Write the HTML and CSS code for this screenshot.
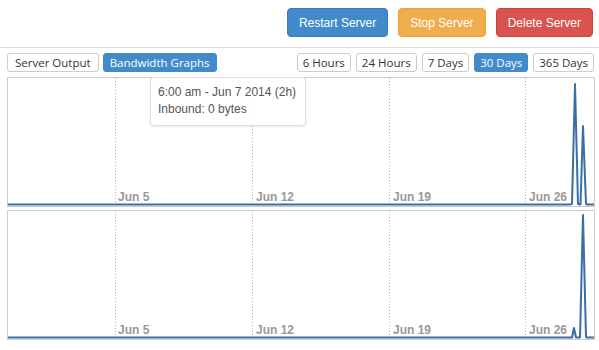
FILE: index.html
```html
<!DOCTYPE html>
<html lang="en">
<head>
    <meta charset="UTF-8">
    <title>Server Bandwidth</title>
    <link rel="stylesheet" href="styles.css">
</head>
<body>
    <div class="actions">
        <button class="btn btn-primary">Restart Server</button>
        <button class="btn btn-warning">Stop Server</button>
        <button class="btn btn-danger">Delete Server</button>
    </div>
    <div class="tabs">
        <div class="group views">
            <span class="tab">Server Output</span>
            <span class="tab active">Bandwidth Graphs</span>
        </div>
        <div class="group ranges">
            <span class="tab">6 Hours</span>
            <span class="tab">24 Hours</span>
            <span class="tab">7 Days</span>
            <span class="tab active">30 Days</span>
            <span class="tab">365 Days</span>
        </div>
    </div>

    <div class="chart">
        <svg width="586" height="128" viewBox="0 0 586 128">
            <g class="grid">
                <line x1="107.5" y1="0" x2="107.5" y2="128"/>
                <line x1="244.5" y1="0" x2="244.5" y2="128"/>
                <line x1="381.5" y1="0" x2="381.5" y2="128"/>
                <line x1="517.5" y1="0" x2="517.5" y2="128"/>
            </g>
            <g class="labels">
                <text x="110" y="123">Jun 5</text>
                <text x="248" y="123">Jun 12</text>
                <text x="385" y="123">Jun 19</text>
                <text x="521" y="123">Jun 26</text>
            </g>
            <polyline class="series" points="0,126.5 562,126.5 564,126 567,6 570,126 572,126.5 572.5,126 575,48 578,126 579,126.5 586,126.5"/>
        </svg>
        <div class="tooltip">
            6:00 am - Jun 7 2014 (2h)<br>
            Inbound: 0 bytes
        </div>
    </div>

    <div class="chart">
        <svg width="586" height="128" viewBox="0 0 586 128">
            <g class="grid">
                <line x1="107.5" y1="0" x2="107.5" y2="128"/>
                <line x1="244.5" y1="0" x2="244.5" y2="128"/>
                <line x1="381.5" y1="0" x2="381.5" y2="128"/>
                <line x1="517.5" y1="0" x2="517.5" y2="128"/>
            </g>
            <g class="labels">
                <text x="110" y="123">Jun 5</text>
                <text x="248" y="123">Jun 12</text>
                <text x="385" y="123">Jun 19</text>
                <text x="521" y="123">Jun 26</text>
            </g>
            <polyline class="series" points="0,126.5 564,126.5 566,117 568,126.5 572,126.5 575,4 578,126 579,126.5 586,126.5"/>
        </svg>
    </div>
</body>
</html>
```

FILE: styles.css
```css
body {
    margin: 0;
    font-family: "Liberation Sans", Arial, sans-serif;
    background-color: #fff;
    width: 599px;
}
.actions {
    display: flex;
    justify-content: flex-end;
    gap: 10px;
    padding: 8px 6px 10px;
    border-bottom: 1px solid #ddd;
}
.btn {
    height: 29px;
    padding: 0 11px;
    border: 1px solid transparent;
    border-radius: 4px;
    color: #fff;
    font-family: "Liberation Sans", Arial, sans-serif;
    font-size: 12px;
    cursor: pointer;
}
.btn-primary {
    background-color: #428bca;
    border-color: #357ebd;
}
.btn-warning {
    background-color: #f0ad4e;
    border-color: #eea236;
}
.btn-danger {
    background-color: #d9534f;
    border-color: #d43f3a;
}
.tabs {
    display: flex;
    justify-content: space-between;
    padding: 5px 5px 0 7px;
}
.group {
    display: flex;
    gap: 4px;
}
.ranges {
    gap: 5px;
}
.tab {
    height: 17px;
    line-height: 17px;
    padding: 0 5px;
    border: 1px solid #ccc;
    border-radius: 3px;
    font-family: "Open Sans", sans-serif;
    font-size: 11.5px;
    color: #333;
    background-color: #fff;
}
.views .tab {
    padding: 0 7px;
}
.views .tab.active {
    padding: 0 6px;
}
.tab.active {
    background-color: #428bca;
    border-color: #428bca;
    color: #fff;
}
.chart {
    position: relative;
    width: 586px;
    height: 128px;
    margin: 5px 0 0 7px;
    border: 1px solid #ccc;
}
.chart + .chart {
    margin-top: 3px;
}
.chart svg {
    display: block;
}
.grid line {
    stroke: #bbb;
    stroke-width: 1;
    stroke-dasharray: 1 2;
}
.labels text {
    font-family: "Liberation Sans", Arial, sans-serif;
    font-size: 12px;
    font-weight: bold;
    fill: #999;
}
.series {
    fill: none;
    stroke: #3a6fa3;
    stroke-width: 2;
    stroke-linejoin: round;
}
.tooltip {
    position: absolute;
    left: 142px;
    top: -1px;
    width: 140px;
    padding: 6px 7px 7px;
    background-color: rgba(255, 255, 255, 0.9);
    border: 1px solid #ddd;
    border-radius: 3px;
    box-shadow: 0 1px 2px rgba(0, 0, 0, 0.08);
    font-size: 12px;
    line-height: 17px;
    color: #555;
}
```
